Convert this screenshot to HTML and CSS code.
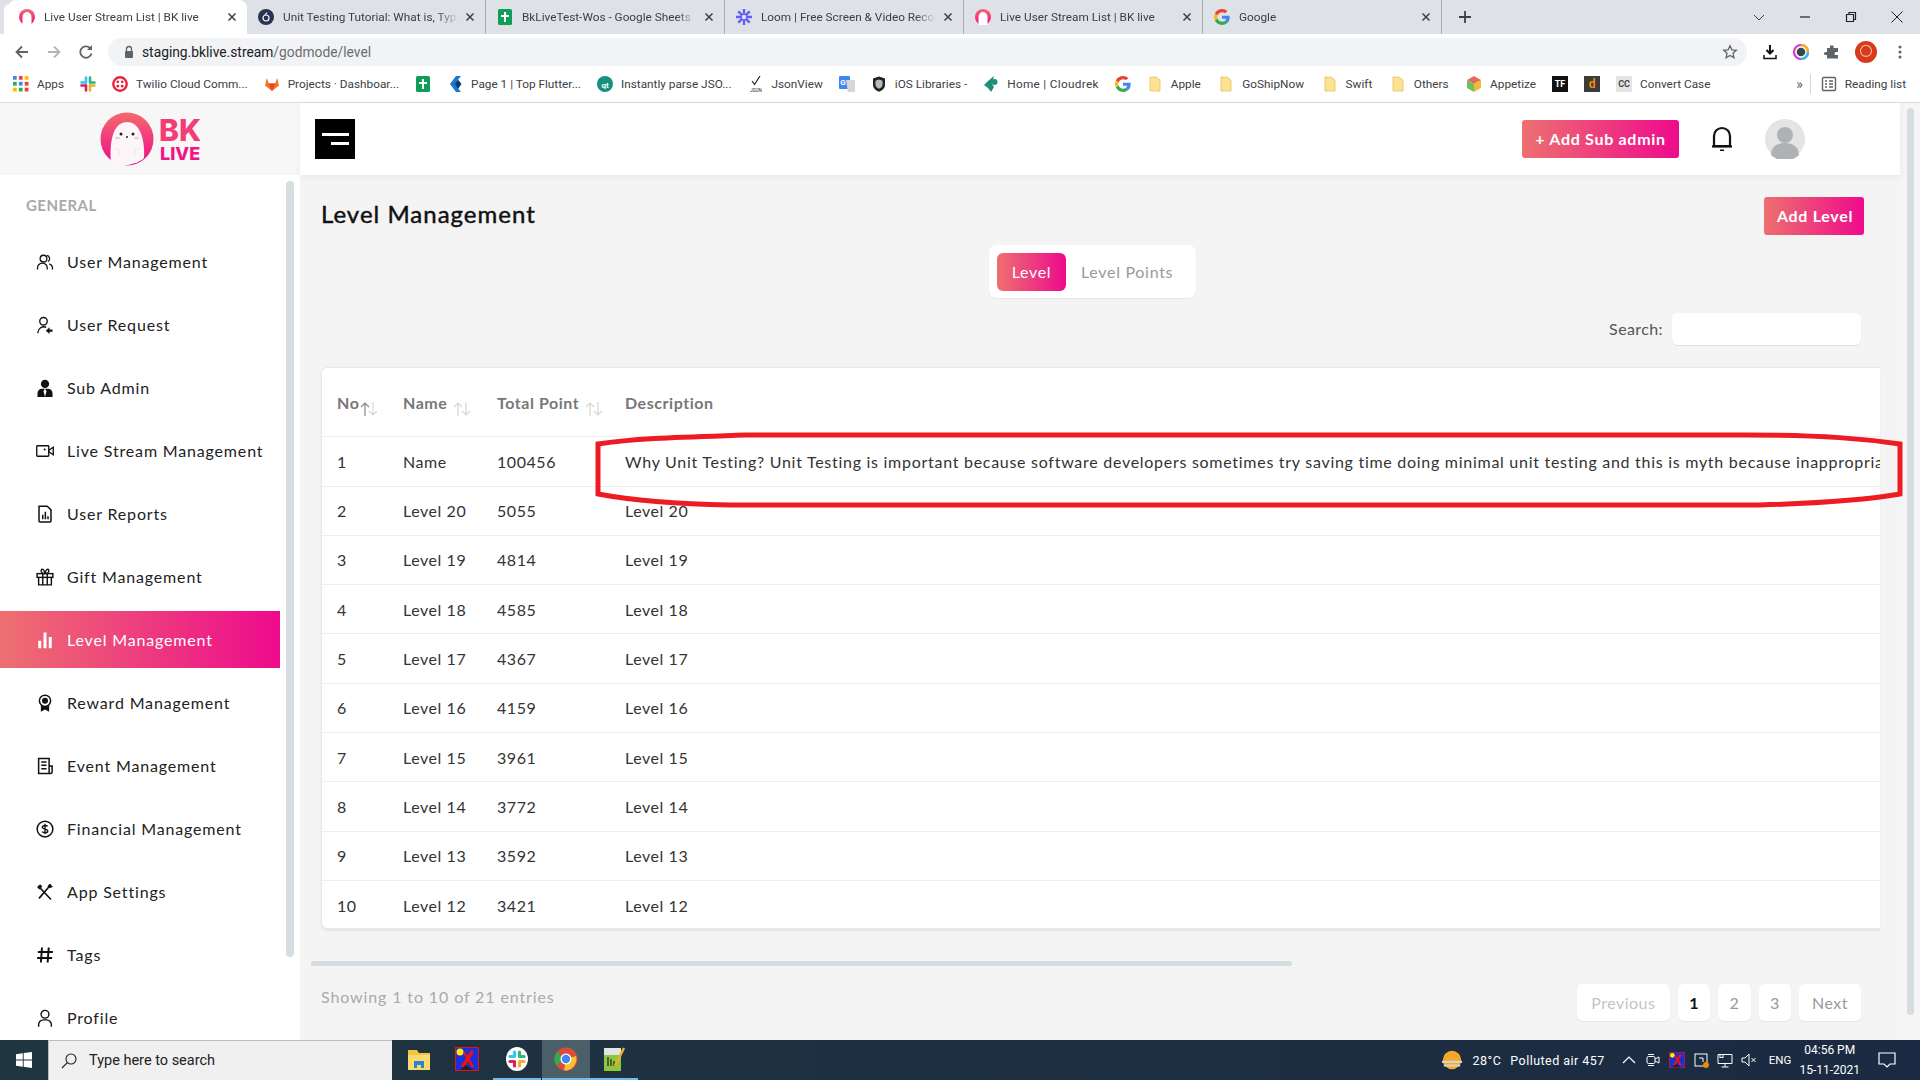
FILE: index.html
```html
<!DOCTYPE html>
<html lang="en">
<head>
<meta charset="utf-8">
<title>Live User Stream List | BK live</title>
<link rel="stylesheet" href="styles.css">
</head>
<body>
<svg class="sprite" aria-hidden="true">
  <defs>
    <linearGradient id="brand" x1="0" y1="0" x2="0" y2="1"><stop offset="0" stop-color="#f56a6a"/><stop offset="1" stop-color="#ee0a8c"/></linearGradient>
    <symbol id="bk" viewBox="0 0 16 16"><circle cx="8" cy="8" r="8" fill="url(#brand)"/><path d="M3.500 16V8a4.500 5 0 0 1 9 0v8z" fill="#fff"/></symbol>
    <symbol id="google" viewBox="0 0 48 48"><path fill="#EA4335" d="M24 9.500c3.500 0 6.700 1.200 9.200 3.600l6.900-6.900C35.900 2.400 30.500 0 24 0 14.600 0 6.500 5.400 2.600 13.200l8 6.200C12.500 13.700 17.800 9.500 24 9.500z"/><path fill="#4285F4" d="M47 24.500c0-1.600-.1-3.100-.4-4.500H24v9h12.900c-.6 3-2.200 5.500-4.700 7.200l7.700 6C44.400 38 47 31.800 47 24.500z"/><path fill="#FBBC05" d="M10.500 28.600c-.5-1.400-.8-3-.8-4.600s.3-3.200.8-4.600l-8-6.200C.9 16.500 0 20.100 0 24s.9 7.500 2.600 10.800z"/><path fill="#34A853" d="M24 48c6.500 0 11.900-2.100 15.900-5.800l-7.700-6c-2.200 1.500-4.900 2.300-8.200 2.300-6.200 0-11.500-4.200-13.400-9.900l-8 6.200C6.500 42.600 14.600 48 24 48z"/></symbol>
    <symbol id="sheet" viewBox="0 0 16 16"><rect x="1" width="14" height="16" rx="1.500" fill="#0f9d58"/><path d="M7 3h2v3h3v2H9v5H7V8H4V6h3z" fill="#fff"/></symbol>
    <symbol id="folder" viewBox="0 0 16 16"><path d="M3 1h6l4 3v11H3z" fill="#fde293" stroke="#e8c15a" stroke-width=".8"/></symbol>
    <symbol id="close" viewBox="0 0 12 12"><path d="M2.500 2.500l7 7M9.500 2.500l-7 7" stroke="#3c4043" stroke-width="1.500" fill="none"/></symbol>
    <symbol id="users" viewBox="0 0 24 24"><g fill="none" stroke="#111" stroke-width="1.700"><circle cx="10" cy="7.500" r="4.500"/><path d="M2 22v-2a6.500 6.500 0 0 1 13 0v2"/><path d="M14.500 3.200a4.500 4.500 0 0 1 1.500 8.300M17.500 14.500a6.500 6.500 0 0 1 4.500 6V22"/></g></symbol>
    <symbol id="userreq" viewBox="0 0 24 24"><g fill="none" stroke="#111" stroke-width="1.800"><circle cx="10" cy="7" r="5"/><path d="M2.500 23v-1a8 8 0 0 1 11-7"/></g><path d="M22 18h-4v-3l-5 4.500 5 4.500v-3h4z" fill="#111"/></symbol>
    <symbol id="admin" viewBox="0 0 24 24"><circle cx="12" cy="6.500" r="5.500" fill="#111"/><path d="M2 24v-5a6 6 0 0 1 6-6h8a6 6 0 0 1 6 6v5z" fill="#111"/><path d="M12 13l-2 3 2 8 2-8z" fill="#fff"/></symbol>
    <symbol id="video" viewBox="0 0 24 24"><g fill="none" stroke="#111" stroke-width="1.800"><rect x="1" y="5" width="16" height="14" rx="1"/><path d="M17 11l6-4v10l-6-4z"/></g><circle cx="11.500" cy="10" r="1.400" fill="#111"/></symbol>
    <symbol id="report" viewBox="0 0 24 24"><path d="M4 1.500h11l5 5V21a1.500 1.500 0 0 1-1.500 1.500h-13A1.500 1.500 0 0 1 4 21z" fill="none" stroke="#111" stroke-width="2"/><path d="M8 13h2v6H8zM11.500 9h2v10h-2zM15 15h2v4h-2z" fill="#111"/></symbol>
    <symbol id="gift" viewBox="0 0 24 24"><g fill="none" stroke="#111" stroke-width="1.900"><rect x="1.500" y="7.500" width="21" height="5"/><path d="M3.500 12.500V22.500h17V12.500M9 7.500v15M15 7.500v15"/><path d="M12 7.500C9 7.500 6 6 7 3s4-1 5 4.500zM12 7.500c3 0 6-1.500 5-4.500s-4-1-5 4.500z"/></g></symbol>
    <symbol id="bars" viewBox="0 0 24 24"><path d="M3 13h4v10H3zM10 2h4v21h-4zM17 8h4v15h-4z" fill="#fff"/></symbol>
    <symbol id="reward" viewBox="0 0 24 24"><circle cx="12" cy="9" r="7.500" fill="none" stroke="#111" stroke-width="2"/><circle cx="12" cy="9" r="4" fill="#111"/><path d="M6.500 15v8.500L12 20.500l5.500 3V15a9 9 0 0 1-11 0z" fill="#111"/></symbol>
    <symbol id="event" viewBox="0 0 24 24"><path d="M3.500 2h14v20h-14z M17.500 12H21.500v8a2 2 0 0 1-2 2h-2" fill="none" stroke="#111" stroke-width="2"/><path d="M7 6.500h7M7 11h7M7 15.500h7" stroke="#111" stroke-width="2"/></symbol>
    <symbol id="finance" viewBox="0 0 24 24"><circle cx="12" cy="12" r="10.500" fill="none" stroke="#111" stroke-width="2"/><path d="M15.500 8.500c-1-1.500-7-2-7 1.200 0 3.300 7.200 1.500 7.200 4.800 0 3-6 2.800-7.500 1M12 5v14" fill="none" stroke="#111" stroke-width="1.800"/></symbol>
    <symbol id="tools" viewBox="0 0 24 24"><path d="M3 4l17 18M20 2.500c-2 .5-3.500 2-3.500 3.500L4 20.500" fill="none" stroke="#111" stroke-width="2.200"/><path d="M1.500 5.500l4-4 3 3-4 4zM18 1l4.500 4-4 2-2.500-2.500z" fill="#111"/></symbol>
    <symbol id="hash" viewBox="0 0 24 24"><path d="M8 2L6.500 22M17 2l-1.500 20M2.500 8h20M1.500 16h20" stroke="#111" stroke-width="2.600" fill="none"/></symbol>
    <symbol id="profile" viewBox="0 0 24 24"><g fill="none" stroke="#111" stroke-width="1.900"><circle cx="12" cy="7" r="5.200"/><path d="M3.500 23.500v-2.500a6.500 6.500 0 0 1 6.500-6.500h4a6.500 6.500 0 0 1 6.500 6.500v2.500"/></g></symbol>
    <symbol id="sort" viewBox="0 0 18 16"><path d="M5 15V2M1 6l4-4 4 4" fill="none" stroke="currentColor" stroke-width="1.200"/><path d="M13 1v13M9 10l4 4 4-4" fill="none" stroke="#d6d6d6" stroke-width="1.200"/></symbol>
    <symbol id="xapp" viewBox="0 0 24 24"><rect x=".5" y=".5" width="23" height="23" fill="#1c2fd6" stroke="#e01515"/><circle cx="5" cy="5" r="3.500" fill="#ffeb00"/><path d="M16 3l3 2-10 16-3-2zM8 6l2-1 9 14-2 2z" fill="#f01010"/><path d="M5 23l6-5 7 5z" fill="#222"/></symbol>
  </defs>
</svg>

<header class="chrome">
  <div class="tabstrip">
    <div class="tab tab-active"><svg class="fav"><use href="#bk"/></svg><span class="tab-title">Live User Stream List | BK live</span><svg class="tab-x"><use href="#close"/></svg></div>
    <div class="tab"><svg class="fav" viewBox="0 0 16 16"><circle cx="8" cy="8" r="8" fill="#2a3154"/><circle cx="8" cy="9" r="3" fill="none" stroke="#fff" stroke-width="1.200"/><path d="M7 6l2-2.500" stroke="#fff" stroke-width="1.200"/></svg><span class="tab-title">Unit Testing Tutorial: What is, Types, Tools</span><svg class="tab-x"><use href="#close"/></svg></div>
    <div class="tab"><svg class="fav"><use href="#sheet"/></svg><span class="tab-title">BkLiveTest-Wos - Google Sheets</span><svg class="tab-x"><use href="#close"/></svg></div>
    <div class="tab"><svg class="fav" viewBox="0 0 16 16"><g stroke="#625df5" stroke-width="2.400"><path d="M8 0v16M0 8h16M2.300 2.300l11.400 11.400M13.700 2.300L2.300 13.700"/></g><circle cx="8" cy="8" r="2.200" fill="#dee1e6"/></svg><span class="tab-title">Loom | Free Screen &amp; Video Recording</span><svg class="tab-x"><use href="#close"/></svg></div>
    <div class="tab"><svg class="fav"><use href="#bk"/></svg><span class="tab-title">Live User Stream List | BK live</span><svg class="tab-x"><use href="#close"/></svg></div>
    <div class="tab"><svg class="fav"><use href="#google"/></svg><span class="tab-title">Google</span><svg class="tab-x"><use href="#close"/></svg></div>
    <svg class="newtab" viewBox="0 0 14 14"><path d="M7 1v12M1 7h12" stroke="#3c4043" stroke-width="1.800"/></svg>
    <div class="winctl">
      <svg class="win" viewBox="0 0 14 14"><path d="M2 5l5 5 5-5" fill="none" stroke="#3c4043"/></svg>
      <svg class="win" viewBox="0 0 14 14"><path d="M2 7h10" stroke="#222" stroke-width="1.200"/></svg>
      <svg class="win" viewBox="0 0 14 14"><path d="M2.500 4.500h7v7h-7zM5 4.500V2.500h6.500v7H9.500" fill="none" stroke="#222" stroke-width="1.200"/></svg>
      <svg class="win" viewBox="0 0 14 14"><path d="M1.500 1.500l11 11M12.500 1.500l-11 11" stroke="#222"/></svg>
    </div>
  </div>
  <div class="toolbar">
    <svg class="navbtn" viewBox="0 0 16 16"><path d="M14 8H3M8 2.500L2.500 8 8 13.500" fill="none" stroke="#5f6368" stroke-width="1.800"/></svg>
    <svg class="navbtn" viewBox="0 0 16 16"><path d="M2 8h11M8 2.500L13.500 8 8 13.500" fill="none" stroke="#b3b6ba" stroke-width="1.800"/></svg>
    <svg class="navbtn" viewBox="0 0 16 16"><path d="M13.500 9.500A5.700 5.700 0 1 1 12 4" fill="none" stroke="#5f6368" stroke-width="1.800"/><path d="M14 1v5H9z" fill="#5f6368"/></svg>
    <div class="omnibox">
      <svg class="lock" viewBox="0 0 12 14"><path d="M3.500 6V4a2.500 2.500 0 0 1 5 0v2" fill="none" stroke="#5f6368" stroke-width="1.300"/><rect x="2" y="6" width="8" height="7" rx="1" fill="#5f6368"/></svg>
      <span class="url"><b>staging.bklive.stream</b>/godmode/level</span>
      <svg class="star" viewBox="0 0 16 16"><path d="M8 1.800l1.900 4 4.400.5-3.300 3 .9 4.400L8 11.500l-3.900 2.200.9-4.400-3.300-3 4.400-.5z" fill="none" stroke="#5f6368" stroke-width="1.300"/></svg>
    </div>
    <div class="exts">
      <svg class="ext" viewBox="0 0 16 16"><path d="M8 1v8M4.500 6L8 9.500 11.500 6" fill="none" stroke="#111" stroke-width="2"/><path d="M2 11v3.500h12V11" fill="none" stroke="#111" stroke-width="1.500"/></svg>
      <svg class="ext" viewBox="0 0 16 16"><circle cx="8" cy="8" r="7" fill="none" stroke="#d53fd0" stroke-width="2.200"/><path d="M8 1a7 7 0 0 1 7 7" fill="none" stroke="#ffb300" stroke-width="2.200"/><path d="M15 8a7 7 0 0 1-7 7" fill="none" stroke="#21c4e8" stroke-width="2.200"/><circle cx="8" cy="8" r="4.300" fill="#37474f"/></svg>
      <svg class="ext" viewBox="0 0 16 16"><path d="M6 1.500h3.500V4H14v4h-2a1.500 1.500 0 0 0 0 3h2v3.500H3V11H1.500a1.500 1.500 0 0 1 0-3H3V4h3z" fill="#5f6368"/></svg>
      <svg class="ext ext-big" viewBox="0 0 20 20"><circle cx="10" cy="10" r="10" fill="#d83a1c"/><circle cx="10" cy="9" r="5" fill="none" stroke="#f7b8a0"/></svg>
      <svg class="ext" viewBox="0 0 16 16"><circle cx="8" cy="3" r="1.500" fill="#5f6368"/><circle cx="8" cy="8" r="1.500" fill="#5f6368"/><circle cx="8" cy="13" r="1.500" fill="#5f6368"/></svg>
    </div>
  </div>
  <nav class="bookmarks">
    <span class="bm"><svg class="bm-ic" viewBox="0 0 15 15"><g fill="#4285f4"><rect width="3.500" height="3.500"/></g><rect x="5.500" width="3.500" height="3.500" fill="#ea4335"/><rect x="11" width="3.500" height="3.500" fill="#fbbc05"/><rect y="5.500" width="3.500" height="3.500" fill="#34a853"/><rect x="5.500" y="5.500" width="3.500" height="3.500" fill="#4285f4"/><rect x="11" y="5.500" width="3.500" height="3.500" fill="#ea4335"/><rect y="11" width="3.500" height="3.500" fill="#fbbc05"/><rect x="5.500" y="11" width="3.500" height="3.500" fill="#34a853"/><rect x="11" y="11" width="3.500" height="3.500" fill="#ea4335"/></svg>Apps</span>
    <span class="bm"><svg class="bm-ic" viewBox="0 0 16 16"><g stroke-width="2.600" stroke-linecap="round"><path d="M6 1.500v5" stroke="#36c5f0"/><path d="M1.500 6.500h4" stroke="#36c5f0"/><path d="M10 1.500v5" stroke="#2eb67d"/><path d="M10.500 6.500h4" stroke="#2eb67d"/><path d="M6 9.500v5" stroke="#e01e5a"/><path d="M1.500 9.500h4" stroke="#e01e5a"/><path d="M10 9.500v5" stroke="#ecb22e"/><path d="M10.500 9.500h4" stroke="#ecb22e"/></g></svg></span>
    <span class="bm"><svg class="bm-ic" viewBox="0 0 16 16"><circle cx="8" cy="8" r="6.700" fill="#fff" stroke="#e8233f" stroke-width="2.400"/><g fill="#e8233f"><circle cx="5.800" cy="5.800" r="1.400"/><circle cx="10.200" cy="5.800" r="1.400"/><circle cx="5.800" cy="10.200" r="1.400"/><circle cx="10.200" cy="10.200" r="1.400"/></g></svg>Twilio Cloud Comm...</span>
    <span class="bm"><svg class="bm-ic" viewBox="0 0 16 16"><path d="M8 15L1 9.500 2.800 2l2 5.500h6.400l2-5.500L15 9.500z" fill="#fc6d26"/><path d="M8 15L4.800 7.500h6.400z" fill="#e24329"/></svg>Projects · Dashboar...</span>
    <span class="bm"><svg class="bm-ic"><use href="#sheet"/></svg></span>
    <span class="bm"><svg class="bm-ic" viewBox="0 0 16 16"><path d="M9 0L3 8l6 8h5L7.500 8 14 0z" fill="#1976d2"/><path d="M7.500 8L11 3.500 14.500 8 11 13z" fill="#0b3a75"/></svg>Page 1 | Top Flutter...</span>
    <span class="bm"><svg class="bm-ic" viewBox="0 0 16 16"><circle cx="8" cy="8" r="8" fill="#16917f"/><text x="8" y="11.500" class="ic-text">qt</text></svg>Instantly parse JSO...</span>
    <span class="bm"><svg class="bm-ic" viewBox="0 0 16 16"><path d="M4 5l2.500 3.500L12 0" fill="none" stroke="#222" stroke-width="1.200"/><text x="8" y="15.500" class="ic-json">JSON</text></svg>JsonView</span>
    <span class="bm"><svg class="bm-ic" viewBox="0 0 16 16"><rect width="11" height="13" rx="1" fill="#4285f4"/><path d="M7 4h9v12H9z" fill="#d5d7db"/><text x="4" y="9" class="ic-text">G</text></svg></span>
    <span class="bm"><svg class="bm-ic" viewBox="0 0 16 16"><path d="M8 .5l6 2v6c0 4-3 6-6 7.200-3-1.200-6-3.200-6-7.200v-6z" fill="#222"/><path d="M8 3.500l3.500 1.200v4c0 2-1.500 3-3.500 4-2-1-3.500-2-3.500-4v-4z" fill="#bbb"/></svg>iOS Libraries -</span>
    <span class="bm bm-sp"><svg class="bm-ic" viewBox="0 0 16 16"><path d="M11 0L5 5 1 9l4 3 3 4 3-5-2-3z" fill="#1f8f78"/><circle cx="11.500" cy="6" r="3" fill="#1f8f78"/></svg>Home | Cloudrek</span>
    <span class="bm"><svg class="bm-ic"><use href="#google"/></svg></span>
    <span class="bm bm-f"><svg class="bm-ic"><use href="#folder"/></svg>Apple</span>
    <span class="bm bm-f"><svg class="bm-ic"><use href="#folder"/></svg>GoShipNow</span>
    <span class="bm bm-f"><svg class="bm-ic"><use href="#folder"/></svg>Swift</span>
    <span class="bm bm-f"><svg class="bm-ic"><use href="#folder"/></svg>Others</span>
    <span class="bm"><svg class="bm-ic" viewBox="0 0 16 16"><path d="M8 0l7 4-7 4-7-4z" fill="#e86a5c"/><path d="M1 4l7 4v8l-7-4z" fill="#6fbf62"/><path d="M15 4L8 8v8l7-4z" fill="#f1b93a"/></svg>Appetize</span>
    <span class="bm"><span class="sq sq-tf">TF</span></span>
    <span class="bm"><span class="sq sq-d">d</span></span>
    <span class="bm"><span class="sq sq-cc">CC</span>Convert Case</span>
    <span class="bm-more">»</span>
    <span class="bm bm-read"><svg class="bm-ic" viewBox="0 0 16 16"><rect x="1.500" y="1.500" width="13" height="13" rx="1" fill="none" stroke="#5f6368" stroke-width="1.400"/><path d="M4 5h2M4 8h2M4 11h2M8 5h4M8 8h4M8 11h4" stroke="#5f6368" stroke-width="1.300"/></svg>Reading list</span>
  </nav>
</header>

<div class="app">
  <aside class="sidebar">
    <div class="logo">
      <svg class="logo-mark" viewBox="0 0 54 54"><circle cx="27" cy="27" r="26.500" fill="url(#brand)"/><path d="M11 52C9 30 13 10 27 10s18 20 17 36c-5 6-27 11-33 6z" fill="#fdf6f8"/><circle cx="21" cy="22" r="1.500" fill="#222"/><circle cx="33" cy="22" r="1.500" fill="#222"/><circle cx="27" cy="25" r="1" fill="#222"/><ellipse cx="17.500" cy="26" rx="2.500" ry="1.300" fill="#f9c6d6"/><ellipse cx="36.500" cy="26" rx="2.500" ry="1.300" fill="#f9c6d6"/><path d="M15 38c3-3 5 0 4 5M39 38c-3-3-5 0-4 5" fill="none" stroke="#eee6ea"/></svg>
      <div class="logo-text"><span class="logo-bk">BK</span><span class="logo-live">LIVE</span></div>
    </div>
    <div class="side-scroll">
      <div class="side-menu">
        <div class="side-label">GENERAL</div>
        <a class="item"><svg class="item-ic"><use href="#users"/></svg>User Management</a>
        <a class="item"><svg class="item-ic"><use href="#userreq"/></svg>User Request</a>
        <a class="item"><svg class="item-ic"><use href="#admin"/></svg>Sub Admin</a>
        <a class="item"><svg class="item-ic"><use href="#video"/></svg>Live Stream Management</a>
        <a class="item"><svg class="item-ic"><use href="#report"/></svg>User Reports</a>
        <a class="item"><svg class="item-ic"><use href="#gift"/></svg>Gift Management</a>
        <a class="item item-active"><svg class="item-ic"><use href="#bars"/></svg>Level Management</a>
        <a class="item"><svg class="item-ic"><use href="#reward"/></svg>Reward Management</a>
        <a class="item"><svg class="item-ic"><use href="#event"/></svg>Event Management</a>
        <a class="item"><svg class="item-ic"><use href="#finance"/></svg>Financial Management</a>
        <a class="item"><svg class="item-ic"><use href="#tools"/></svg>App Settings</a>
        <a class="item"><svg class="item-ic"><use href="#hash"/></svg>Tags</a>
        <a class="item"><svg class="item-ic"><use href="#profile"/></svg>Profile</a>
      </div>
      <div class="side-thumb"></div>
    </div>
  </aside>

  <div class="main">
    <div class="topbar">
      <button class="burger"><span class="bl bl-1"></span><span class="bl bl-2"></span></button>
      <button class="btn btn-top">+ Add Sub admin</button>
      <svg class="bell" viewBox="0 0 24 28"><path d="M4 21V11a8 8 0 0 1 16 0v10z" fill="none" stroke="#111" stroke-width="2.200"/><path d="M2 21.500h20" stroke="#111" stroke-width="2.200"/><path d="M10 24.500h4v1.500h-4z" fill="#111"/></svg>
      <svg class="avatar" viewBox="0 0 40 40"><circle cx="20" cy="20" r="20" fill="#e3e4e6"/><circle cx="20" cy="16" r="8" fill="#b0b1b3"/><path d="M6 36c0-8 6-12 14-12s14 4 14 12a20 20 0 0 1-28 0z" fill="#b0b1b3"/></svg>
    </div>
    <div class="content">
      <div class="head-row">
        <h1 class="title">Level Management</h1>
        <button class="btn btn-add">Add Level</button>
      </div>
      <div class="pill-row">
        <div class="pill"><span class="pill-on">Level</span><span class="pill-off">Level Points</span></div>
      </div>
      <div class="search-row"><label class="search-label">Search:</label><span class="search-box"></span></div>
      <div class="table-card">
        <table class="grid">
          <colgroup><col class="c1"><col class="c2"><col class="c3"><col class="c4"></colgroup>
          <thead>
            <tr><th>No<svg class="sort sort-up"><use href="#sort"/></svg></th><th>Name<svg class="sort sort-gap"><use href="#sort"/></svg></th><th>Total Point<svg class="sort sort-gap"><use href="#sort"/></svg></th><th>Description</th></tr>
          </thead>
          <tbody>
            <tr class="first"><td>1</td><td>Name</td><td>100456</td><td class="long">Why Unit Testing? Unit Testing is important because software developers sometimes try saving time doing minimal unit testing and this is myth because inappropriate unit testing leads to high defect fixing costs</td></tr>
            <tr><td>2</td><td>Level 20</td><td>5055</td><td>Level 20</td></tr>
            <tr><td>3</td><td>Level 19</td><td>4814</td><td>Level 19</td></tr>
            <tr><td>4</td><td>Level 18</td><td>4585</td><td>Level 18</td></tr>
            <tr><td>5</td><td>Level 17</td><td>4367</td><td>Level 17</td></tr>
            <tr><td>6</td><td>Level 16</td><td>4159</td><td>Level 16</td></tr>
            <tr><td>7</td><td>Level 15</td><td>3961</td><td>Level 15</td></tr>
            <tr><td>8</td><td>Level 14</td><td>3772</td><td>Level 14</td></tr>
            <tr><td>9</td><td>Level 13</td><td>3592</td><td>Level 13</td></tr>
            <tr><td>10</td><td>Level 12</td><td>3421</td><td>Level 12</td></tr>
          </tbody>
        </table>
      </div>
      <div class="hscroll"></div>
      <div class="foot-row">
        <span class="showing">Showing 1 to 10 of 21 entries</span>
        <div class="pager">
          <span class="pg pg-prev">Previous</span>
          <span class="pg pg-on">1</span>
          <span class="pg">2</span>
          <span class="pg">3</span>
          <span class="pg pg-next">Next</span>
        </div>
      </div>
    </div>
    <svg class="ink" viewBox="0 0 1310 80" aria-hidden="true"><path d="M3 12C40 6 90 5 150 3H1150C1230 3 1270 7 1305 12V62C1270 68 1230 71 1165 73H135C80 72 35 68 3 62z" fill="none" stroke="#ed1c24" stroke-width="5"/></svg>
  </div>
  <div class="page-scroll"><div class="page-thumb"></div></div>
</div>

<footer class="taskbar">
  <div class="start"><svg class="winlogo" viewBox="0 0 16 16"><path d="M0 2.300l6.800-1v6.300H0zM7.700 1.100L16 0v7.600H7.700zM0 8.500h6.800v6.300L0 13.800zM7.700 8.500H16V16l-8.300-1.200z" fill="#fff"/></svg></div>
  <div class="tsearch"><svg class="tsearch-ic" viewBox="0 0 16 16"><circle cx="10" cy="6" r="5" fill="none" stroke="#222" stroke-width="1.100"/><path d="M6.300 9.700L1 15" stroke="#222" stroke-width="1.200"/></svg>Type here to search</div>
  <div class="tapps">
    <span class="tapp"><svg class="tapp-ic" viewBox="0 0 24 24"><path d="M1 3h9l2 3h11v17H1z" fill="#f5c344"/><path d="M1 8h22v15H1z" fill="#fbd96a"/><path d="M7 14h10v7h-3v-3h-4v3H7z" fill="#2a83d6"/></svg></span>
    <span class="tapp"><svg class="tapp-ic"><use href="#xapp"/></svg></span>
    <span class="tapp tapp-open tapp-slack"><svg class="tapp-ic" viewBox="0 0 24 24"><ellipse cx="12" cy="12" rx="11" ry="12" fill="#fff"/><g stroke-width="3.200" stroke-linecap="round"><path d="M9.500 5v4.500" stroke="#36c5f0"/><path d="M5 9.500h3" stroke="#36c5f0"/><path d="M14.500 5v4.500" stroke="#2eb67d"/><path d="M16 9.500h3" stroke="#2eb67d"/><path d="M9.500 14.500V19" stroke="#e01e5a"/><path d="M5 14.500h3" stroke="#e01e5a"/><path d="M14.500 14.500V19" stroke="#ecb22e"/><path d="M16 14.500h3" stroke="#ecb22e"/></g></svg></span>
    <span class="tapp tapp-active tapp-open"><svg class="tapp-ic" viewBox="0 0 24 24"><circle cx="12" cy="12" r="11.500" fill="#dd4b39"/><path d="M12 12L2.200 18.500A11.500 11.500 0 0 1 3 5z" fill="#34a853"/><path d="M12 12l10-3a11.500 11.500 0 0 1-12 14.500z" fill="#fbc02d"/><circle cx="12" cy="12" r="5.500" fill="#fff"/><circle cx="12" cy="12" r="4.200" fill="#4285f4"/></svg></span>
    <span class="tapp tapp-open"><svg class="tapp-ic" viewBox="0 0 24 24"><path d="M2 1h17v23H2z" fill="#8dc63f"/><path d="M2 1h17v7H2z" fill="#e4e4e4"/><path d="M6 10v9M9 12v7M12 14v5" stroke="#222" stroke-width="1.200"/><path d="M22 1L13 19" stroke="#e8b02a" stroke-width="2.500"/></svg></span>
  </div>
  <div class="tray">
    <svg class="tr-sun" viewBox="0 0 24 24"><circle cx="12" cy="12" r="10" fill="#f4a72a"/><path d="M1 14h22M3 18h18" stroke="#d9d3c3" stroke-width="2.400"/></svg>
    <span class="tr-temp">28°C</span>
    <span class="tr-air">Polluted air 457</span>
    <svg class="tr-ic tr-up" viewBox="0 0 16 16"><path d="M2 11l6-6 6 6" fill="none" stroke="#fff" stroke-width="1.200"/></svg>
    <svg class="tr-ic" viewBox="0 0 16 16"><rect x="2" y="4.500" width="8" height="7" rx="1.500" fill="none" stroke="#fff"/><path d="M10 7l4-2v6l-4-2" fill="none" stroke="#fff"/><path d="M3 2.500h6M3 13.500h6" stroke="#fff"/></svg>
    <svg class="tr-ic"><use href="#xapp"/></svg>
    <svg class="tr-ic" viewBox="0 0 16 16"><rect x="2" y="2" width="12" height="12" fill="none" stroke="#fff"/><circle cx="13" cy="13" r="3" fill="#f08c00"/><path d="M6 6h4v4" fill="none" stroke="#fff"/></svg>
    <svg class="tr-ic" viewBox="0 0 16 16"><path d="M1 2.500h14v9H1zM8 11.500V15M4.500 15h7" fill="none" stroke="#fff"/><rect x="3" y="2.500" width="3" height="3" fill="none" stroke="#fff"/></svg>
    <svg class="tr-ic" viewBox="0 0 16 16"><path d="M1 6h3l4-4v12l-4-4H1z" fill="none" stroke="#fff"/><path d="M10.500 6l4 4M14.500 6l-4 4" stroke="#fff"/></svg>
    <span class="tr-eng">ENG</span>
    <span class="tr-clock"><span>04:56 PM</span><span>15-11-2021</span></span>
    <svg class="tr-note" viewBox="0 0 18 18"><path d="M1 2h16v11h-5l-3 3-3-3H1z" fill="none" stroke="#fff" stroke-width="1.200"/></svg>
  </div>
</footer>
</body>
</html>
```

FILE: styles.css
```css
* { box-sizing: border-box; }
html, body { height: 100%; }
body {
  margin: 0;
  height: 100vh;
  overflow: hidden;
  display: flex;
  flex-direction: column;
  font-family: "Lato", "Liberation Sans", sans-serif;
  color: #222;
  background: #f4f4f4;
}
.sprite { position: absolute; width: 0; height: 0; }

/* browser chrome */
.chrome { font-family: "Roboto", "Liberation Sans", sans-serif; font-size: 11.800px; color: #3c4043; flex: none; }
.tabstrip { height: 34px; background: #dee1e6; display: flex; align-items: flex-end; padding-left: 8px; }
.tab { width: 239px; height: 34px; display: flex; align-items: center; padding: 0 9px 0 11px; position: relative; border-right: 1px solid #a9acb1; background-clip: content-box; }
.tab-active { background: #fff; border-right: 0; border-radius: 8px 8px 0 0; background-clip: border-box; }
.tab-active::before { content: ""; position: absolute; left: -4px; top: 4px; bottom: 0; width: 6px; background: #fff; border-radius: 6px 0 0 0; }
.fav { width: 16px; height: 16px; flex: none; margin-right: 9px; position: relative; }
.tab-title { flex: 1; white-space: nowrap; overflow: hidden; mask-image: linear-gradient(90deg, #000 88%, transparent); }
.tab-x { width: 12px; height: 12px; flex: none; margin-left: 6px; }
.newtab { width: 14px; height: 14px; margin: 0 0 10px 16px; flex: none; }
.winctl { margin-left: auto; height: 34px; display: flex; align-items: center; gap: 32px; padding-right: 16px; }
.win { width: 14px; height: 14px; }
.toolbar { height: 35px; background: #fff; display: flex; align-items: center; padding-left: 14px; }
.navbtn { width: 16px; height: 16px; margin-right: 16px; flex: none; }
.omnibox { width: 1639px; height: 28px; margin-left: -2px; border-radius: 14px; background: #f1f3f4; display: flex; align-items: center; padding: 0 9px 0 15px; }
.lock { width: 12px; height: 14px; margin-right: 7px; }
.url { font-size: 13.800px; color: #6a6d71; }
.url b { font-weight: 400; color: #202124; }
.star { width: 16px; height: 16px; margin-left: auto; }
.exts { display: flex; align-items: center; gap: 15px; padding-left: 15px; }
.ext { width: 16px; height: 16px; }
.ext-big { width: 22px; height: 22px; }
.bookmarks { height: 34px; background: #fff; border-bottom: 1px solid #d9dadc; display: flex; align-items: center; padding: 0 0 3px 13px; gap: 16px; font-size: 11.800px; white-space: nowrap; }
.bm { display: flex; align-items: center; gap: 8px; }
.bm-sp { letter-spacing: .3px; }
.bm-f { padding-right: 1.500px; }
.bm-ic { width: 16px; height: 16px; flex: none; }
.ic-text { font-size: 8px; font-weight: 700; fill: #fff; text-anchor: middle; }
.ic-json { font-size: 4.500px; fill: #222; text-anchor: middle; }
.sq { width: 16px; height: 16px; display: flex; align-items: center; justify-content: center; font-size: 9px; font-weight: 700; flex: none; }
.sq-tf { background: #111; color: #fff; }
.sq-d { background: #3b3b3b; color: #f08c00; font-size: 12px; }
.sq-cc { background: #e4e4e4; color: #444; }
.bm-more { margin-left: auto; padding-right: 7px; border-right: 1px solid #d4d5d7; color: #5f6368; font-size: 14px; line-height: 20px; }
.bm-read { padding-right: 14px; margin-left: -6px; }

/* app shell */
.app { flex: 1; min-height: 0; display: flex; }
.sidebar { width: 300px; flex: none; background: #fff; display: flex; flex-direction: column; }
.logo { height: 72px; flex: none; background: #f7f7f7; display: flex; align-items: center; padding-left: 100px; gap: 5px; }
.logo-mark { width: 54px; height: 54px; flex: none; }
.logo-text { display: flex; flex-direction: column; font-family: "Inter", sans-serif; font-weight: 800; line-height: 1; }
.logo-bk { font-size: 30px; color: #f23d77; letter-spacing: 0; line-height: 30px; }
.logo-live { font-size: 18px; color: #f0148a; line-height: 18px; letter-spacing: 0; margin-left: 1px; }
.side-scroll { flex: 1; min-height: 0; display: flex; }
.side-menu { width: 286px; overflow: hidden; flex: none; }
.side-label { height: 58px; padding: 20px 0 0 26px; font-size: 15px; font-weight: 700; color: #a9a9a9; letter-spacing: .45px; line-height: 20px; }
.item { width: 280px; height: 57px; margin-bottom: 6px; padding-left: 36px; display: flex; align-items: center; gap: 13px; font-size: 16px; letter-spacing: .83px; color: #222; }
.item-active { background: linear-gradient(90deg, #ed7070, #ee0a8c); color: #fff; }
.item-ic { width: 18px; height: 18px; flex: none; }
.side-thumb { width: 8px; height: 776px; margin-top: 6px; background: #d5dde0; border-radius: 4px; flex: none; }

.main { width: 1600px; flex: none; min-width: 0; display: flex; flex-direction: column; position: relative; }
.topbar { height: 72px; flex: none; background: #fff; box-shadow: 0 2px 8px rgba(0,0,0,.05); display: flex; align-items: center; padding-left: 15px; position: relative; }
.burger { width: 40px; height: 40px; border: 0; background: #000; padding: 0; display: flex; flex-direction: column; align-items: flex-end; justify-content: center; gap: 6px; padding-right: 6px; }
.bl { height: 3px; background: #fff; display: block; }
.bl-1 { width: 27px; }
.bl-2 { width: 18px; }
.btn { border: 0; border-radius: 3px; background: linear-gradient(90deg, #ed7070, #ee0a8c); color: #fff; font-family: inherit; font-weight: 700; font-size: 16px; letter-spacing: .7px; height: 38px; padding: 0 0 2px; }
.btn-top { width: 157px; margin-left: auto; }
.bell { width: 24px; height: 28px; margin-left: 31px; }
.avatar { width: 40px; height: 40px; margin: 0 95px 0 31px; }

.content { flex: 1; min-height: 0; padding: 22px 20px 0 21px; }
.head-row { display: flex; justify-content: space-between; align-items: flex-start; padding-right: 16px; }
.title { margin: 0; font-size: 24px; font-weight: 400; -webkit-text-stroke: .45px #111; line-height: 34px; color: #111; letter-spacing: 1px; }
.btn-add { width: 100px; padding-left: 2px; }
.pill-row { display: flex; justify-content: center; padding-right: 16px; margin-top: 10px; }
.pill { width: 207px; height: 53px; background: #fff; border-radius: 8px; box-shadow: 0 1px 2px rgba(0,0,0,.06); padding: 8px; display: flex; align-items: center; font-size: 16px; letter-spacing: .7px; }
.pill-on { width: 69px; height: 38px; border-radius: 6px; background: linear-gradient(90deg, #ed7070, #ee0a8c); color: #fff; display: flex; align-items: center; justify-content: center; }
.pill-off { margin-left: 15px; color: #999; }
.search-row { display: flex; justify-content: flex-end; align-items: center; gap: 9px; padding-right: 19px; margin-top: 15px; height: 32px; }
.search-label { font-size: 16px; letter-spacing: .4px; color: #555; padding-bottom: 2px; }
.search-box { width: 189px; height: 32px; background: #fff; border-radius: 6px; box-shadow: 0 1px 1px rgba(0,0,0,.08); }
.table-card { margin-top: 22px; height: 562px; background: #fff; border-radius: 6px 0 0 6px; border: 1px solid #e8e8e8; border-right: 0; box-shadow: 0 2px 2px rgba(0,0,0,.06); overflow: hidden; }
.grid { width: 1559px; table-layout: fixed; border-collapse: collapse; font-size: 16px; letter-spacing: .55px; }
.c1 { width: 65px; }
.c2 { width: 94px; }
.c3 { width: 128px; }
.grid th { height: 68px; text-align: left; font-weight: 700; color: #777; padding: 1px 0 0 16px; white-space: nowrap; border-bottom: 1px solid #eee; }
.grid td { height: 49.300px; padding: 0 0 0 16px; white-space: nowrap; overflow: hidden; color: #333; border-bottom: 1px solid #eee; }
.grid th:first-child, .grid td:first-child { padding-left: 15px; }
.grid .first td { height: 50px; }
.grid .long { letter-spacing: .72px; }
.grid tr:last-child td { border-bottom: 0; }
.sort { width: 18px; height: 16px; color: #d6d6d6; vertical-align: baseline; margin: -16px 0 -8px 1px; }
.sort-gap { margin-left: 6px; }
.sort-up { color: #888; }
.hscroll { width: 981px; height: 5px; margin: 32px 0 0 -10px; background: #d5dde0; border-radius: 2px; }
.foot-row { display: flex; justify-content: space-between; margin-top: 18px; padding-right: 19px; }
.showing { font-size: 16px; letter-spacing: .88px; color: #aaa; line-height: 26px; }
.pager { display: flex; gap: 8px; }
.pg { height: 37px; width: 32.400px; background: #fff; border-radius: 6px; box-shadow: 0 1px 1px rgba(0,0,0,.06); display: flex; align-items: center; justify-content: center; font-size: 16px; letter-spacing: .5px; color: #999; }
.pg-prev { width: 93px; color: #c4c4c4; }
.pg-next { width: 62px; }
.pg-on { color: #111; font-weight: 700; }
.ink { position: absolute; left: 295px; top: 329px; width: 1310px; height: 80px; overflow: visible; }
.page-scroll { flex: 1; background: #f5f5f5; padding: 5px 0 0 7px; }
.page-thumb { width: 7px; height: 907px; background: #d5dde0; border-radius: 4px; }

/* windows taskbar */
.taskbar { height: 40px; flex: none; display: flex; background: linear-gradient(90deg, #1f3540, #1b2a42); color: #fff; font-family: "Roboto", "Liberation Sans", sans-serif; }
.start { width: 48px; display: flex; align-items: center; justify-content: center; }
.winlogo { width: 16px; height: 16px; }
.tsearch { width: 344px; background: #f0f0f0; border: 1px solid #bcbcbc; border-bottom: 0; border-right: 0; color: #222; display: flex; align-items: center; font-size: 14.500px; padding-left: 12px; gap: 12px; }
.tsearch-ic { width: 16px; height: 16px; }
.tapps { display: flex; padding-left: 3px; }
.tapp { width: 48px; height: 40px; display: flex; align-items: center; justify-content: center; border-bottom: 2px solid transparent; }
.tapp-ic { width: 24px; height: 24px; }
.tapp-open { border-bottom-color: #76b9ed; }
.tapp-slack { margin-left: 2px; }
.tapp-active { background: #4a5f68; margin-left: 1px; }
.tray { margin-left: auto; display: flex; align-items: center; font-size: 12.500px; }
.tr-sun { width: 22px; height: 22px; margin-right: 9px; }
.tr-temp { margin-right: 9px; letter-spacing: .5px; }
.tr-air { margin-right: 16px; letter-spacing: .47px; }
.tr-ic { width: 16px; height: 16px; margin-right: 8px; }
.tr-eng { margin: 0 8px 0 4px; font-size: 11.500px; }
.tr-clock { display: flex; flex-direction: column; align-items: center; line-height: 20px; font-size: 12px; margin-right: 18px; }
.tr-note { width: 18px; height: 18px; margin-right: 24px; }
```
